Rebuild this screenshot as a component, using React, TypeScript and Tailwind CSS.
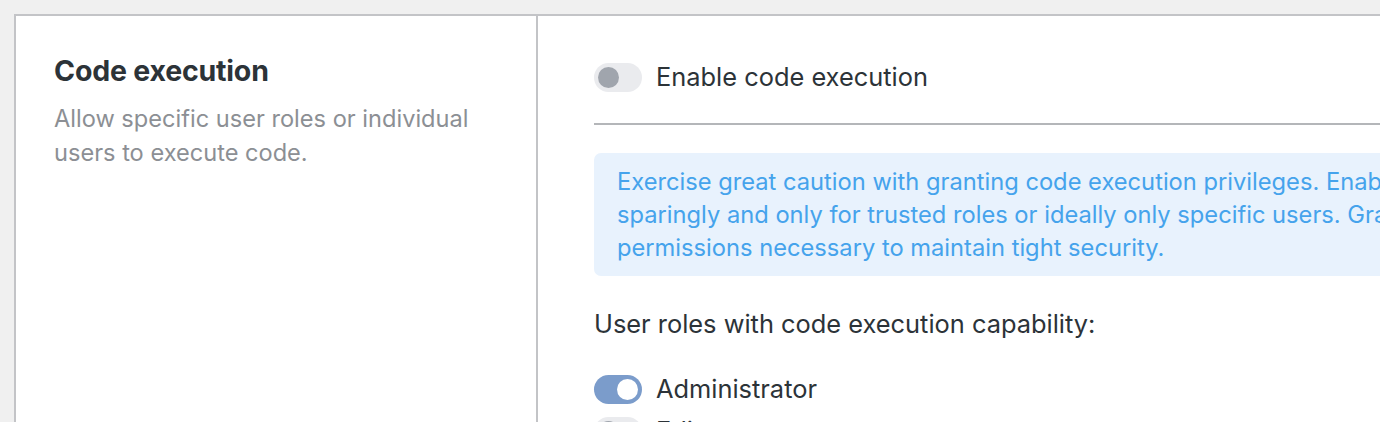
import React from "react";

function Toggle({ on }: { on: boolean }) {
  return on ? (
    <span className="relative inline-flex h-[29px] w-[48px] shrink-0 items-center rounded-full bg-[#7b9ccb]">
      <span className="absolute right-[4px] h-[21px] w-[21px] rounded-full bg-white" />
    </span>
  ) : (
    <span className="relative inline-flex h-[29px] w-[48px] shrink-0 items-center rounded-full bg-[#eaebee]">
      <span className="absolute left-[4px] h-[21px] w-[21px] rounded-full bg-[#a0a5ad]" />
    </span>
  );
}

export default function App() {
  return (
    <div
      className="h-[422px] w-[1380px] overflow-hidden bg-[#f0f0f0] pl-[14px] pt-[14px]"
      style={{ fontFamily: "Inter, 'Noto Sans', sans-serif" }}
    >
      <div className="flex h-[600px] w-[1500px] border-2 border-[#c3c4c7] bg-white">
        <div className="w-[522px] shrink-0 border-r-2 border-[#c3c4c7] pl-[38px] pt-[37px]">
          <h2 className="text-[28.5px] font-bold leading-[36px] tracking-[-0.2px] text-[#2c3338]">
            Code execution
          </h2>
          <p className="mt-[13px] w-[440px] text-[23.6px] leading-[34px] text-[#8c8f94]">
            Allow specific user roles or individual users to execute code.
          </p>
        </div>
        <div className="w-[960px] pl-[56px] pt-[45px] text-[25.4px] text-[#2c3338]">
          <div className="flex items-center gap-[14px]">
            <Toggle on={false} />
            <span className="leading-[32px]">Enable code execution</span>
          </div>
          <div className="mt-[30px] h-[2px] w-[900px] bg-[#b4b6b9]" />
          <div className="mt-[28px] w-[900px] whitespace-nowrap rounded-[7px] bg-[#e8f2fd] px-[23px] py-[12px] text-[23.7px] leading-[33px] text-[#45a3ec]">
            Exercise great caution with granting code execution privileges. Enable this capability
            <br />
            sparingly and only for trusted roles or ideally only specific users. Grant only the minimum
            <br />
            permissions necessary to maintain tight security.
          </div>
          <p className="mt-[32px] leading-[32px]">User roles with code execution capability:</p>
          <div className="mt-[33px] flex flex-col gap-[10px]">
            <div className="flex items-center gap-[14px]">
              <Toggle on={true} />
              <span className="leading-[32px]">Administrator</span>
            </div>
            <div className="flex items-center gap-[14px]">
              <Toggle on={false} />
              <span className="leading-[32px]">Editor</span>
            </div>
          </div>
        </div>
      </div>
    </div>
  );
}
